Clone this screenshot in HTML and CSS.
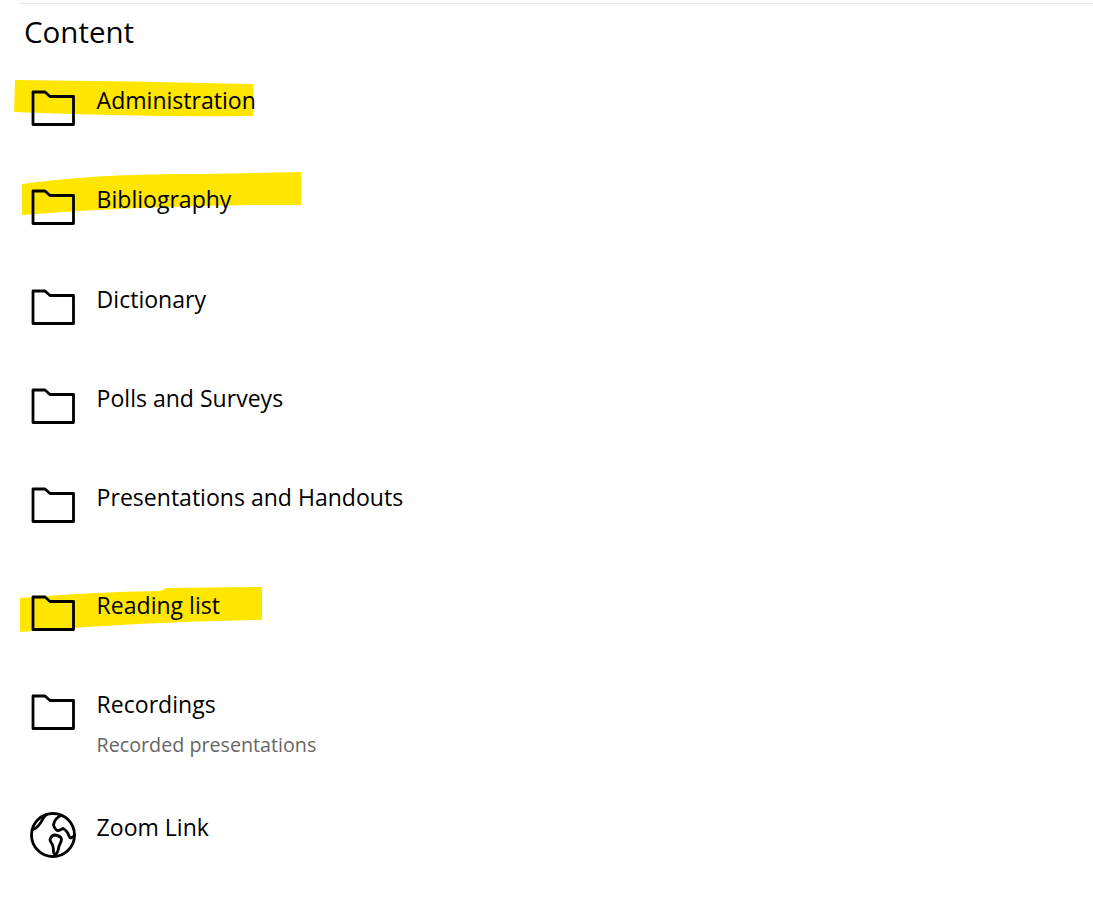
FILE: index.html
```html
<!DOCTYPE html>
<html lang="en">
<head>
<meta charset="utf-8">
<title>Content</title>
<link rel="stylesheet" href="styles.css">
</head>
<body>
<main class="page">
  <svg class="marks" width="1093" height="919" viewBox="0 0 1093 919" aria-hidden="true">
    <path d="M15 80 Q130 81 253 84 L253 116 Q130 117 14 112 Z"/>
    <path d="M22 184 Q100 173 200 174 L301 172 L301 205 Q160 204 22 215 Z"/>
    <path d="M20 598 Q90 592 160 591 L166 588 L262 587 L262 620 Q140 622 20 632 Z"/>
  </svg>
  <h1 class="title">Content</h1>
  <ul class="list">
    <li class="item">
      <svg class="icon" viewBox="0 0 44 36"><path d="M2 2H14L19 6.500H42.500V34.500H2Z"/></svg>
      <div class="body"><a class="name">Administration</a></div>
    </li>
    <li class="item">
      <svg class="icon" viewBox="0 0 44 36"><path d="M2 2H14L19 6.500H42.500V34.500H2Z"/></svg>
      <div class="body"><a class="name">Bibliography</a></div>
    </li>
    <li class="item">
      <svg class="icon" viewBox="0 0 44 36"><path d="M2 2H14L19 6.500H42.500V34.500H2Z"/></svg>
      <div class="body"><a class="name">Dictionary</a></div>
    </li>
    <li class="item">
      <svg class="icon" viewBox="0 0 44 36"><path d="M2 2H14L19 6.500H42.500V34.500H2Z"/></svg>
      <div class="body"><a class="name">Polls and Surveys</a></div>
    </li>
    <li class="item item-wide">
      <svg class="icon" viewBox="0 0 44 36"><path d="M2 2H14L19 6.500H42.500V34.500H2Z"/></svg>
      <div class="body"><a class="name">Presentations and Handouts</a></div>
    </li>
    <li class="item">
      <svg class="icon" viewBox="0 0 44 36"><path d="M2 2H14L19 6.500H42.500V34.500H2Z"/></svg>
      <div class="body"><a class="name">Reading list</a></div>
    </li>
    <li class="item item-desc">
      <svg class="icon" viewBox="0 0 44 36"><path d="M2 2H14L19 6.500H42.500V34.500H2Z"/></svg>
      <div class="body"><a class="name">Recordings</a><p class="desc">Recorded presentations</p></div>
    </li>
    <li class="item">
      <svg class="icon globe" viewBox="0 0 46 46">
        <circle cx="23" cy="23" r="21.500"/>
        <path d="M2.500 18C7 16 10.500 12 13 6.500C14 5 15 4 16.500 2.500"/>
        <path d="M31.500 3.500C27 5 24 9 23.500 13C24.500 17 27 19 29 18.500L33 16.500C36 18 38 21 39 24C40 27 42 26 44.500 23.500"/>
        <path d="M20 27.500C21 24.500 23 23 25 23C28 23.500 31 25 31.500 27C31.500 30 30 32 29 34C28.500 37 28 40 26.500 41.500C25 42.500 23.500 42 23.500 40C23.500 36 23 33 21.500 31C20.500 30 20 29 20 27.500Z"/>
      </svg>
      <div class="body"><a class="name">Zoom Link</a></div>
    </li>
  </ul>
</main>
</body>
</html>
```
FILE: styles.css
```css
html, body {
  margin: 0;
  padding: 0;
  background: #fff;
}

body {
  font-family: "Open Sans", "Noto Sans", sans-serif;
  color: #000;
}

.page {
  position: relative;
  width: 1093px;
  height: 919px;
  overflow: hidden;
  padding: 3px 0 0 19px;
  box-sizing: border-box;
}

.page::before {
  content: "";
  display: block;
  height: 1px;
  background: #e6e6e6;
}

.marks {
  position: absolute;
  left: 0;
  top: 0;
  fill: #ffe600;
}

.title {
  position: relative;
  margin: 8px 0 0 5px;
  font-size: 29.500px;
  line-height: 40px;
  font-weight: 400;
}

.list {
  position: relative;
  list-style: none;
  margin: 0;
  padding: 32px 0 0 12px;
}

.item {
  display: flex;
  gap: 21.600px;
  height: 99.300px;
}

.item-wide {
  height: 108px;
}

.item-desc {
  height: 123px;
}

.icon {
  flex: none;
  width: 44px;
  height: 36px;
  margin-top: 6px;
  fill: none;
  stroke: #000;
  stroke-width: 2.800;
  stroke-linejoin: round;
}

.globe {
  width: 46px;
  height: 46px;
  margin: 1px -1px 0 -1px;
  stroke-width: 2.800;
  stroke-linecap: round;
}

.name {
  display: block;
  font-size: 23.060px;
  line-height: 32px;
}

.desc {
  margin: 12px 0 0;
  font-size: 19.700px;
  line-height: 26px;
  color: #666;
}
```
